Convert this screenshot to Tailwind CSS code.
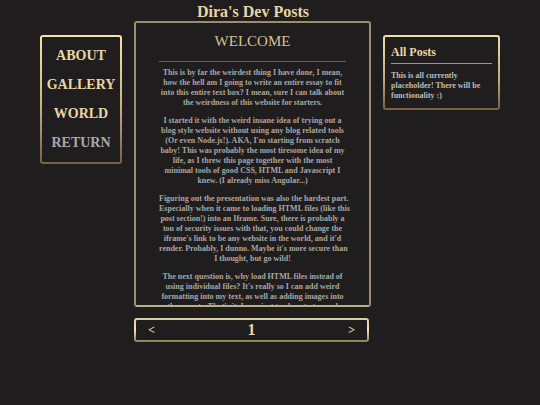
<!DOCTYPE html>
<html lang="en">
<head>
<meta charset="utf-8">
<meta name="viewport" content="width=device-width, initial-scale=1">
<title>Dira's Dev Posts</title>
<script src="https://cdn.jsdelivr.net/npm/@tailwindcss/browser@4"></script>
</head>
<body class="min-h-screen bg-[#1f1d1e] font-['Liberation_Serif',serif] text-[#e9d6a4]">
<h1 class="pt-[2px] pr-[34px] text-center text-[16px] leading-[19px] font-bold">Dira's Dev Posts</h1>
<div class="grid grid-cols-[minmax(0,82fr)_minmax(0,237fr)_minmax(0,117fr)] items-start gap-3 px-10">
  <nav class="mt-[14px] flex flex-col gap-[9px] rounded-[3px] border-2 border-transparent pt-[9px] pb-[9px] text-center text-[14px] leading-5 font-bold [background:linear-gradient(#1f1d1e,#1f1d1e)_padding-box,linear-gradient(#f5e3ae,#c9b282_55%,#756040)_border-box]">
    <a href="#about">ABOUT</a>
    <a href="#gallery">GALLERY</a>
    <a href="#world">WORLD</a>
    <a href="#return" class="text-[#aba8a8]">RETURN</a>
  </nav>
  <main>
    <article class="h-[286px] overflow-hidden rounded-[3px] border-2 border-[#9c8e6a] border-b-[#bcae88] px-[23px] text-center">
      <h2 class="border-b border-[#6b6046] pt-[7px] pb-[9px] text-[15px] leading-[22px] text-[#d2c292]">WELCOME</h2>
      <div class="flex flex-col gap-2 pt-[6px] text-[8px] leading-[10px] font-bold whitespace-nowrap text-[#a9a6a3]">
        <p>This is by far the weirdest thing I have done, I mean,<br>how the hell am I going to write an entire essay to fit<br>into this entire text box? I mean, sure I can talk about<br>the weirdness of this website for starters.</p>
        <p>I started it with the weird insane idea of trying out a<br>blog style website without using any blog related tools<br>(Or even Node.js!). AKA, I'm starting from scratch<br>baby! This was probably the most tiresome idea of my<br>life, as I threw this page together with the most<br>minimal tools of good CSS, HTML and Javascript I<br>knew. (I already miss Angular...)</p>
        <p>Figuring out the presentation was also the hardest part.<br>Especially when it came to loading HTML files (like this<br>post section!) into an Iframe. Sure, there is probably a<br>ton of security issues with that, you could change the<br>iframe's link to be any website in the world, and it'd<br>render. Probably, I dunno. Maybe it's more secure than<br>I thought, but go wild!</p>
        <p>The next question is, why load HTML files instead of<br>using individual files? It's really so I can add weird<br>formatting into my text, as well as adding images into<br>these posts. That's it, I was just too lazy to try and</p>
      </div>
    </article>
    <div class="mt-[11px] mr-0.5 flex items-center justify-between rounded-[3px] border-2 border-transparent px-3 leading-5 [background:linear-gradient(#1f1d1e,#1f1d1e)_padding-box,linear-gradient(#d9cda0,#f3e3b4_50%,#8d7b56)_border-box]">
      <button aria-label="Previous page" class="text-[12px] font-bold">&lt;</button>
      <span class="text-[16px] font-bold">1</span>
      <button aria-label="Next page" class="text-[12px] font-bold">&gt;</button>
    </div>
  </main>
  <aside class="mt-[14px] rounded-[3px] border-2 border-transparent px-[6px] pt-[8px] pb-[7px] [background:linear-gradient(#1f1d1e,#1f1d1e)_padding-box,linear-gradient(#f0dfac,#bda97c_60%,#756040)_border-box]">
    <h2 class="border-b border-[#a99a72] pb-[4px] text-[12px] leading-[14px] font-bold">All Posts</h2>
    <p class="pt-[7px] text-[8px] leading-[10px] font-bold text-[#bfbcb8]">This is all currently<br>placeholder! There will be<br>functionality :)</p>
  </aside>
</div>
</body>
</html>
